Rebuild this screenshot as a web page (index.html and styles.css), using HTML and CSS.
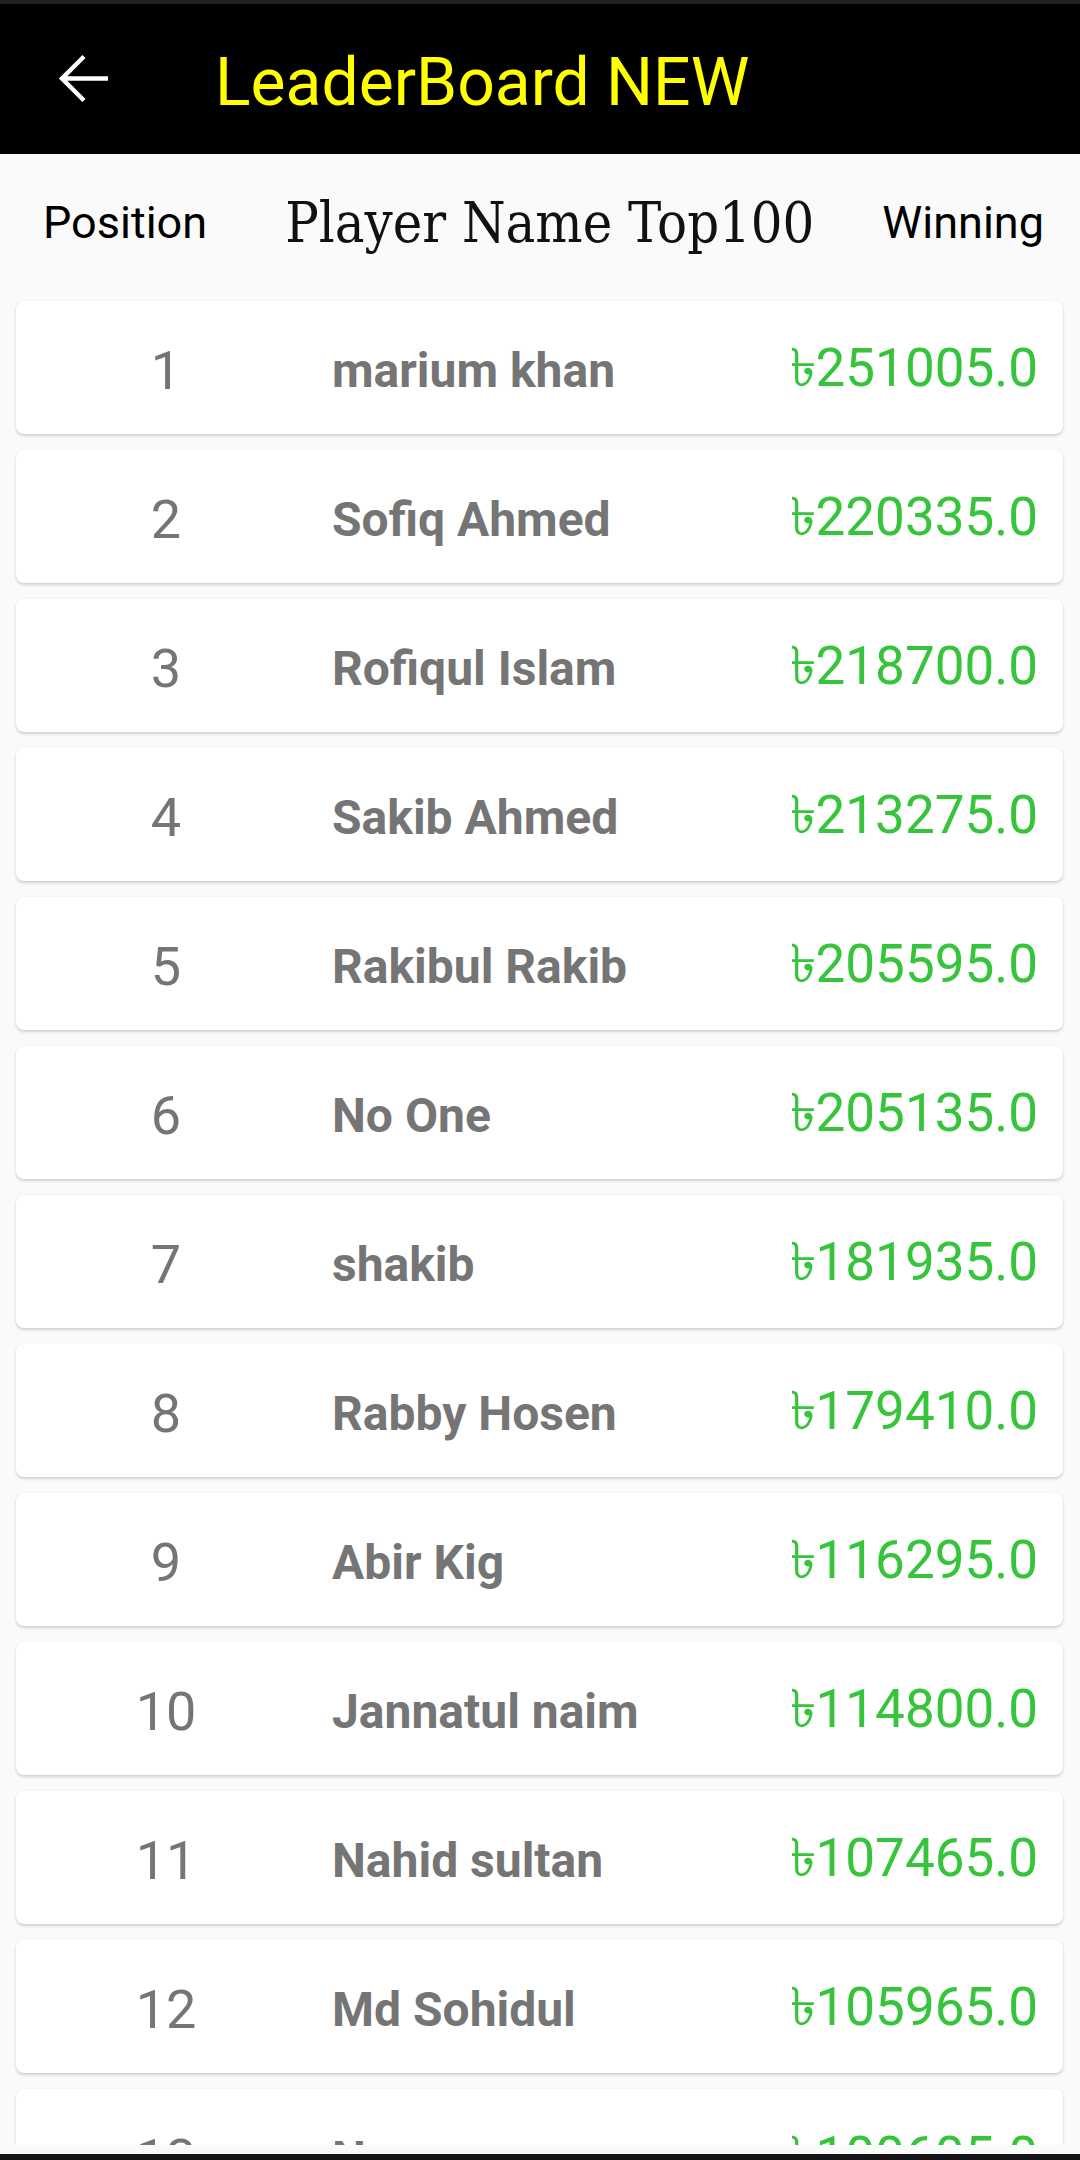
FILE: index.html
```html
<!DOCTYPE html>
<html>
<head>
<meta charset="utf-8">
<link rel="stylesheet" href="styles.css">
</head>
<body>
<div class="screen">
  <div class="status"></div>
  <header class="toolbar">
    <div class="back">
      <svg width="72" height="72" viewBox="0 0 72 72"><path d="M60 35.5H15M36 13.5L14 35.5L36 57.5" fill="none" stroke="#fff" stroke-width="4.5"/></svg>
    </div>
    <h1 class="title">LeaderBoard NEW</h1>
  </header>
  <div class="colhead">
    <span class="ch-pos">Position</span>
    <span class="ch-name">Player Name Top100</span>
    <span class="ch-win">Winning</span>
  </div>
  <div class="list">
    <div class="card"><span class="pos">1</span><span class="name">marium khan</span><span class="amt">৳251005.0</span></div>
    <div class="card"><span class="pos">2</span><span class="name">Sofiq Ahmed</span><span class="amt">৳220335.0</span></div>
    <div class="card"><span class="pos">3</span><span class="name">Rofiqul Islam</span><span class="amt">৳218700.0</span></div>
    <div class="card"><span class="pos">4</span><span class="name">Sakib Ahmed</span><span class="amt">৳213275.0</span></div>
    <div class="card"><span class="pos">5</span><span class="name">Rakibul Rakib</span><span class="amt">৳205595.0</span></div>
    <div class="card"><span class="pos">6</span><span class="name">No One</span><span class="amt">৳205135.0</span></div>
    <div class="card"><span class="pos">7</span><span class="name">shakib</span><span class="amt">৳181935.0</span></div>
    <div class="card"><span class="pos">8</span><span class="name">Rabby Hosen</span><span class="amt">৳179410.0</span></div>
    <div class="card"><span class="pos">9</span><span class="name">Abir Kig</span><span class="amt">৳116295.0</span></div>
    <div class="card"><span class="pos">10</span><span class="name">Jannatul naim</span><span class="amt">৳114800.0</span></div>
    <div class="card"><span class="pos">11</span><span class="name">Nahid sultan</span><span class="amt">৳107465.0</span></div>
    <div class="card"><span class="pos">12</span><span class="name">Md Sohidul</span><span class="amt">৳105965.0</span></div>
    <div class="card"><span class="pos">13</span><span class="name">Nayeem</span><span class="amt">৳100605.0</span></div>
  </div>
  <div class="bottom-gap"></div>
  <div class="navbar"></div>
</div>
</body>
</html>
```
FILE: styles.css
```css
* { box-sizing: border-box; }
html, body { margin: 0; padding: 0; }
body { background: #fafafa; font-family: Roboto, "Noto Sans", sans-serif; }
.screen { width: 1080px; height: 2160px; display: flex; flex-direction: column; overflow: hidden; background: #fafafa; }
.status { height: 4px; background: #212121; flex: none; }
.toolbar { height: 150px; background: #000; display: flex; align-items: center; padding: 6px 0 0 48px; flex: none; }
.back { width: 72px; height: 72px; margin-top: -6px; flex: none; }
.back svg { display: block; }
.title { margin: 0 0 0 95px; font-size: 66px; font-weight: 400; color: #ffff00; font-family: Roboto, sans-serif; }
.colhead { height: 137px; display: flex; align-items: center; padding: 0 36px 0 43px; flex: none; color: #000; }
.ch-pos, .ch-win { font-size: 45px; font-family: Roboto, sans-serif; }
.ch-name { margin-left: 78px; font-family: "DejaVu Serif", serif; font-stretch: condensed; font-size: 55.5px; color: #111; }
.ch-win { margin-left: auto; }
.list { flex: 1; overflow: hidden; padding: 10px 17px 0 16px; }
.card { height: 133px; margin-bottom: 16px; background: #fff; border-radius: 8px; box-shadow: 0 2px 3px rgba(0,0,0,0.16), 0 0 2px rgba(0,0,0,0.06); display: flex; align-items: center; padding: 6px 25px 0 0; }
.pos { width: 300px; text-align: center; font-size: 54px; color: #757575; flex: none; }
.name { margin-left: 16px; flex: 1; font-size: 48px; font-weight: 700; color: #757575; white-space: nowrap; }
.amt { font-size: 53px; color: #36c43a; white-space: nowrap; }
.bottom-gap { height: 9px; flex: none; }
.navbar { height: 6px; background: #141414; flex: none; }
```
